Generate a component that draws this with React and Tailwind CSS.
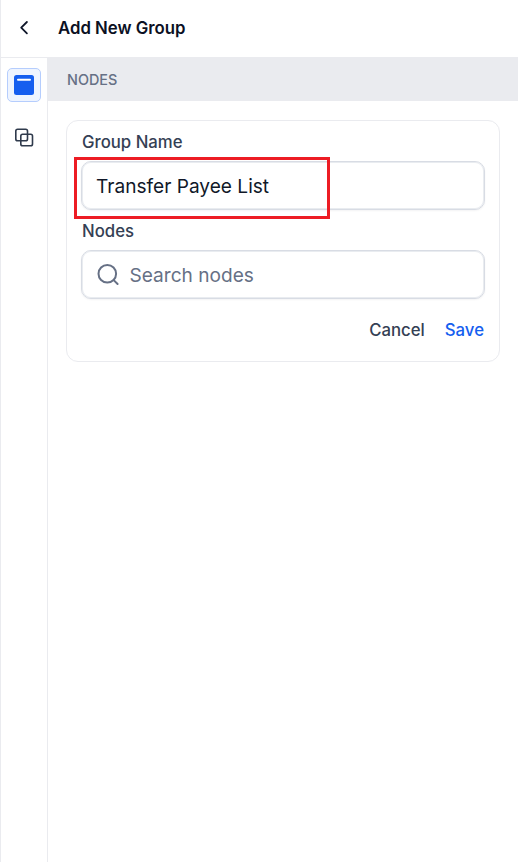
const inputClass =
  "flex w-full items-center rounded-[10px] border border-[#d8dce4] bg-white text-[19.1px] leading-6 shadow-[inset_0_0_0_1px_#e9ecf0,0_1px_2px_rgba(16,24,40,0.05)]";

function Header() {
  return (
    <header className="flex h-[58px] shrink-0 items-center border-b border-[#eaebef]">
      <button className="flex h-full w-[46px] items-center justify-center pb-px" aria-label="Back">
        <svg width="24" height="24" viewBox="0 0 24 24" fill="none" stroke="#0f172a" strokeWidth="1.8" strokeLinecap="round" strokeLinejoin="round">
          <path d="M14.9 6 9.2 11.7l5.7 5.7" />
        </svg>
      </button>
      <h1 className="ml-[11px] pb-px text-[16.75px] leading-6 font-semibold text-[#0b1023]">Add New Group</h1>
    </header>
  );
}

function Sidebar() {
  return (
    <nav className="flex w-[47px] shrink-0 flex-col items-center gap-[19px] border-r border-[#eaebef] pt-[10px]">
      <button aria-label="Nodes" className="flex size-[34px] items-center justify-center rounded-[5px] border border-[#b5cdfd] bg-[#eef4ff]">
        <svg width="20" height="20" viewBox="0 0 20 20">
          <rect width="20" height="20" rx="2.5" fill="#155eef" />
          <path d="M4 4.7h12" stroke="#fff" strokeWidth="2" strokeLinecap="round" />
        </svg>
      </button>
      <button aria-label="Groups" className="flex size-[34px] items-center justify-center">
        <svg width="20" height="20" viewBox="0 0 20 20" fill="none" stroke="#2f3a4c" strokeWidth="1.6">
          <rect x="1.8" y="1.2" width="11.7" height="11.6" rx="1.8" />
          <rect x="6.8" y="6.2" width="11.7" height="11.6" rx="1.8" />
        </svg>
      </button>
    </nav>
  );
}

function GroupForm() {
  return (
    <section className="mt-[19px] mr-[18px] ml-[18px] h-[242px] rounded-[12px] border border-[#eaebef] px-[14px] pt-[9px]">
      <label htmlFor="group-name" className="block h-[31px] pl-px text-[16.75px] leading-6 font-medium text-[#344054]">
        Group Name
      </label>
      <div className="relative">
        <input id="group-name" defaultValue="Transfer Payee List" className={`${inputClass} h-[49px] px-[14px] text-[#101828] outline-none`} />
        <div className="pointer-events-none absolute -top-1 -left-[7px] h-[62px] w-[256px] border-[3px] border-[#ed1c24]" />
      </div>
      <div className="mt-[9px] h-[31px] pl-px text-[16.75px] leading-6 font-medium text-[#344054]">Nodes</div>
      <div className={`${inputClass} h-[49px] px-[14px] text-[#667085]`}>
        <svg width="24" height="24" viewBox="0 0 24 24" fill="none" stroke="#667085" strokeWidth="2" strokeLinecap="round">
          <circle cx="11.3" cy="10.7" r="8.8" />
          <path d="m17.7 17.1 3.9 3.9" />
        </svg>
        <span className="ml-[9.5px]">Search nodes</span>
      </div>
      <div className="mt-[19px] flex justify-end gap-5 pr-px text-[16.75px] leading-6 font-medium">
        <button className="text-[#344054]">Cancel</button>
        <button className="text-[#155eef]">Save</button>
      </div>
    </section>
  );
}

export default function App() {
  return (
    <div className="flex h-[862px] w-[518px] flex-col overflow-hidden border-l border-[#eaebef] bg-white font-['Inter',sans-serif]">
      <Header />
      <div className="flex min-h-0 flex-1">
        <Sidebar />
        <main className="-mt-px min-w-0 flex-1">
          <div className="flex h-[44px] items-center bg-[#eaebef] pt-px pl-[19px] text-[14.4px] font-medium text-[#667085]">NODES</div>
          <GroupForm />
        </main>
      </div>
    </div>
  );
}
